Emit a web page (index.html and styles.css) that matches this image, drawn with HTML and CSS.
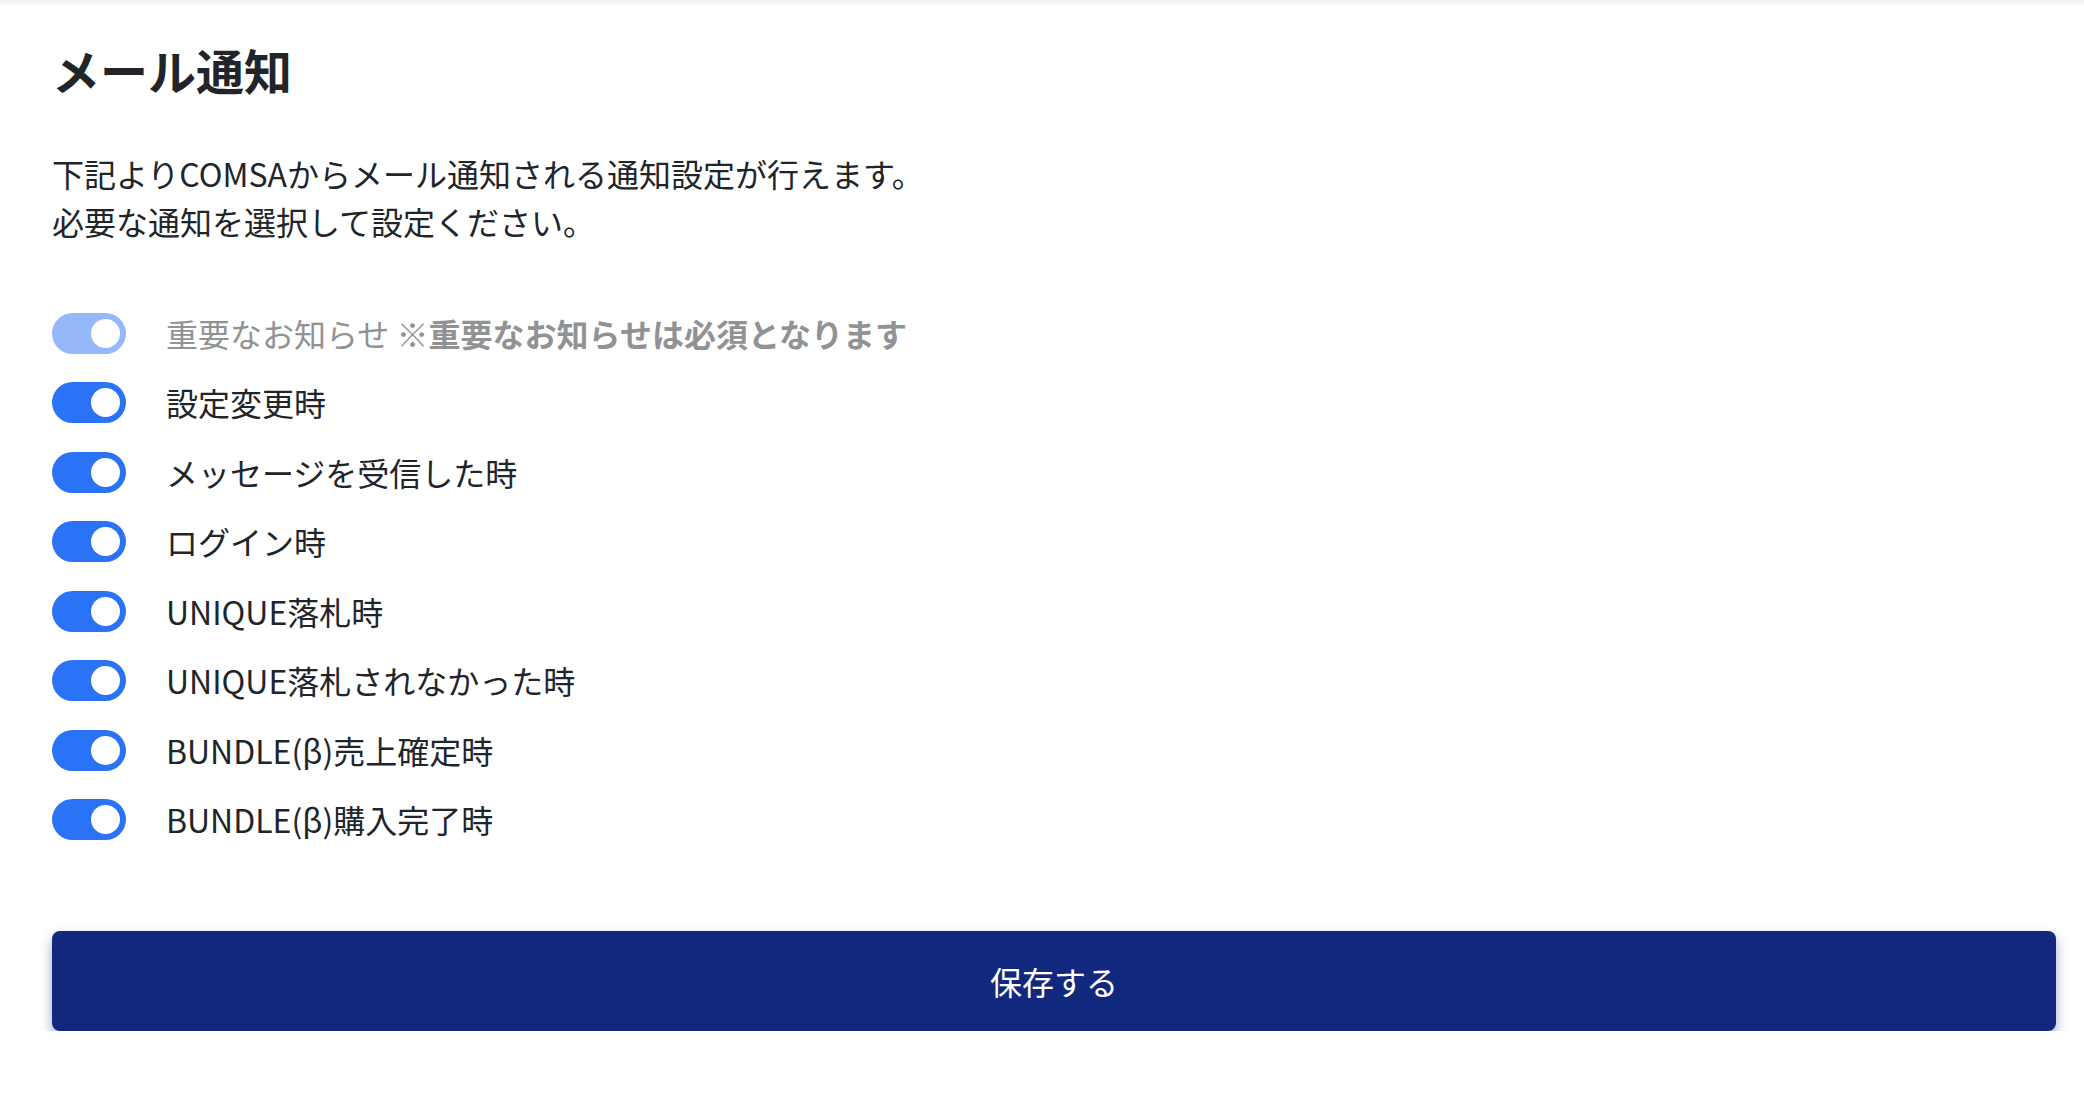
FILE: index.html
```html
<!DOCTYPE html>
<html lang="ja">
<head>
<meta charset="utf-8">
<title>メール通知</title>
<link rel="stylesheet" href="styles.css">
</head>
<body>
<div class="topshade"></div>
<main class="page">
  <h1 class="title">メール通知</h1>
  <p class="lead">下記よりCOMSAからメール通知される通知設定が行えます。<br>必要な通知を選択して設定ください。</p>
  <ul class="switches">
    <li class="switch-row is-disabled">
      <span class="switch"><span class="knob"></span></span>
      <span class="label">重要なお知らせ ※<b>重要なお知らせは必須となります</b></span>
    </li>
    <li class="switch-row">
      <span class="switch"><span class="knob"></span></span>
      <span class="label">設定変更時</span>
    </li>
    <li class="switch-row">
      <span class="switch"><span class="knob"></span></span>
      <span class="label">メッセージを受信した時</span>
    </li>
    <li class="switch-row">
      <span class="switch"><span class="knob"></span></span>
      <span class="label">ログイン時</span>
    </li>
    <li class="switch-row">
      <span class="switch"><span class="knob"></span></span>
      <span class="label">UNIQUE落札時</span>
    </li>
    <li class="switch-row">
      <span class="switch"><span class="knob"></span></span>
      <span class="label">UNIQUE落札されなかった時</span>
    </li>
    <li class="switch-row">
      <span class="switch"><span class="knob"></span></span>
      <span class="label">BUNDLE(β)売上確定時</span>
    </li>
    <li class="switch-row">
      <span class="switch"><span class="knob"></span></span>
      <span class="label">BUNDLE(β)購入完了時</span>
    </li>
  </ul>
  <button class="save" type="button">保存する</button>
</main>
</body>
</html>
```

FILE: styles.css
```css
html, body {
  margin: 0;
  padding: 0;
  background: #ffffff;
}

body {
  font-family: "Noto Sans CJK JP", "Noto Sans", sans-serif;
  color: #212529;
}

.topshade {
  height: 6px;
  background: linear-gradient(to bottom, #f1f1f6, #ffffff);
}

.page {
  padding: 35px 28px 0 52px;
}

.title {
  margin: 0;
  font-size: 48px;
  line-height: 57.6px;
  font-weight: 700;
  color: #212529;
}

.lead {
  margin: 50px 0 0;
  font-size: 32px;
  line-height: 48px;
}

.switches {
  list-style: none;
  margin: 68px 0 0;
  padding: 0;
  display: flex;
  flex-direction: column;
  gap: 28.5px;
}

.switch-row {
  display: flex;
  align-items: center;
  gap: 40px;
  height: 41px;
}

.switch {
  flex: none;
  width: 74px;
  height: 41px;
  border-radius: 21px;
  background: #2a72f6;
  display: flex;
  align-items: center;
  justify-content: flex-end;
  padding: 0 6px;
  box-sizing: border-box;
}

.knob {
  width: 29px;
  height: 29px;
  border-radius: 50%;
  background: #ffffff;
}

.label {
  font-size: 32px;
  line-height: 41px;
  white-space: nowrap;
}

.label b {
  font-weight: 700;
}

.is-disabled .switch {
  background: #95b8fb;
}

.is-disabled .label {
  color: #909294;
}

.save {
  display: block;
  width: 100%;
  height: 100px;
  margin-top: 91px;
  border: 0;
  border-radius: 8px;
  background: #12287f;
  color: #ffffff;
  font-family: "Noto Sans CJK JP", "Noto Sans", sans-serif;
  font-size: 32px;
  line-height: 100px;
  padding: 0;
  box-shadow: 0 6px 12px rgba(18, 40, 128, 0.4);
  cursor: pointer;
}
```
